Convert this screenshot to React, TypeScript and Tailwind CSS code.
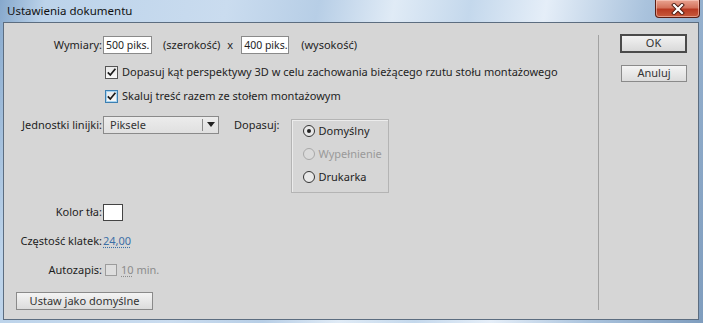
import React from "react";

const font = { fontFamily: '"Noto Sans", "Open Sans", sans-serif' };

function Check({ blue = false }: { blue?: boolean }) {
  return (
    <span
      className={
        "w-[13px] h-[13px] flex items-center justify-center bg-[linear-gradient(#e9e9e9,#f8f8f8)] border " +
        (blue ? "border-[#3c7fb1] shadow-[inset_0_0_0_1px_#a9d4f0]" : "border-[#555]")
      }
    >
      <svg width="11" height="11" viewBox="0 0 11 11">
        <path d="M1.8 5.3 L4.3 8 L9.4 1.8" fill="none" stroke="#1a1a1a" strokeWidth="1.7" />
      </svg>
    </span>
  );
}

function Radio({ checked = false, disabled = false, label }: { checked?: boolean; disabled?: boolean; label: string }) {
  return (
    <div className="flex items-center h-[14px] whitespace-nowrap">
      <span
        className={
          "w-[12px] h-[12px] rounded-full border flex items-center justify-center " +
          (disabled ? "border-[#a8a8a8] bg-[#dadada]" : "border-[#333] bg-[#e8e8e8]")
        }
      >
        {checked && <span className="w-[4px] h-[4px] rounded-full bg-[#222]" />}
      </span>
      <span className={"ml-[3px] " + (disabled ? "text-[#9a9a9a]" : "text-[#1e1e1e]")}>{label}</span>
    </div>
  );
}

export default function App() {
  return (
    <div
      className="relative w-[703px] h-[323px] overflow-hidden whitespace-nowrap bg-[linear-gradient(100deg,#86a8cc_0%,#bcd3ea_6%,#cadcef_30%,#b7cee6_42%,#e0ebf6_52%,#c4d8ec_62%,#e5eef8_72%,#aac3dd_85%,#7f9dbe_100%)] text-[11px] text-[#1e1e1e]"
      style={font}
    >
      {/* title bar */}
      <div className="h-[22px] flex items-center pl-[7px] text-[11.5px] text-[#111]">Ustawienia dokumentu</div>

      {/* close button */}
      <div className="absolute top-0 right-[3px] w-[45px] h-[18px] rounded-b-[4px] border border-t-0 border-[#5b1d12] bg-[linear-gradient(#e9a491_0%,#d4735c_45%,#b83a22_55%,#c85a3c_100%)] shadow-[inset_0_0_0_1px_rgba(255,220,210,0.5)] flex items-center justify-center">
        <svg width="14" height="12" viewBox="0 0 14 12">
          <path d="M3 2 L11 10 M11 2 L3 10" stroke="#4a1a10" strokeWidth="4" strokeLinecap="square" />
          <path d="M3 2 L11 10 M11 2 L3 10" stroke="#ffffff" strokeWidth="2.2" strokeLinecap="square" />
        </svg>
      </div>

      {/* client area */}
      <div className="ml-[3px] w-[696px] h-[298px] border border-[#5c6d80] bg-[#d6d6d6] flex">
        {/* left content */}
        <div className="w-[594px] pt-[13px] flex flex-col">
          {/* Wymiary */}
          <div className="flex items-center h-[18px]">
            <span className="w-[99px] text-right pr-[1px]">Wymiary:</span>
            <span className="w-[49px] h-[18px] bg-white border border-[#8a8a8a] pl-[2px] leading-[16px] overflow-hidden text-[10.5px]">500 piks.</span>
            <span className="ml-[11px]">(szerokość)</span>
            <span className="ml-[7px]">x</span>
            <span className="ml-[8px] w-[48px] h-[18px] bg-white border border-[#8a8a8a] pl-[2px] leading-[16px] overflow-hidden text-[10.5px]">400 piks.</span>
            <span className="ml-[12px]">(wysokość)</span>
          </div>

          {/* checkbox 1 */}
          <div className="flex items-center h-[14px] mt-[11px] pl-[101px]">
            <Check />
            <span className="ml-[4px]">Dopasuj kąt perspektywy 3D w celu zachowania bieżącego rzutu stołu montażowego</span>
          </div>

          {/* checkbox 2 */}
          <div className="flex items-center h-[14px] mt-[10px] pl-[101px]">
            <Check blue />
            <span className="ml-[4px]">Skaluj treść razem ze stołem montażowym</span>
          </div>

          {/* Jednostki + Dopasuj */}
          <div className="flex items-start mt-[13px]">
            <span className="w-[99px] text-right pr-[1px] h-[18px] leading-[18px]">Jednostki linijki:</span>
            <div className="w-[116px] h-[18px] border border-[#8a8a8a] bg-[linear-gradient(#ececec,#e0e0e0)] flex items-center">
              <span className="flex-1 pl-[6px] text-[#333]">Piksele</span>
              <span className="w-px h-[12px] bg-[#8a8a8a]" />
              <span className="w-[15px] flex justify-center">
                <svg width="8" height="6" viewBox="0 0 8 6">
                  <path d="M0 0 H8 L4 5 Z" fill="#222" />
                </svg>
              </span>
            </div>
            <span className="ml-[15px] h-[18px] leading-[18px]">Dopasuj:</span>
            <div className="ml-[12px] mt-[3px] w-[98px] h-[74px] border border-[#b4b4b4] shadow-[inset_1px_1px_0_#ececec] pl-[11px] pt-[4px] flex flex-col gap-[9px]">
              <Radio checked label="Domyślny" />
              <Radio disabled label="Wypełnienie" />
              <Radio label="Drukarka" />
            </div>
          </div>

          {/* Kolor tła */}
          <div className="flex items-center h-[17px] mt-[11px]">
            <span className="w-[99px] text-right pr-[1px]">Kolor tła:</span>
            <span className="w-[20px] h-[17px] bg-white border border-[#444]" />
          </div>

          {/* Częstość */}
          <div className="flex items-center h-[16px] mt-[12px]">
            <span className="w-[99px] text-right pr-[1px]">Częstość klatek:</span>
            <span className="text-[#3d6fa6] underline decoration-dotted decoration-[#3d6fa6] underline-offset-[2px]">24,00</span>
          </div>

          {/* Autozapis */}
          <div className="flex items-center h-[16px] mt-[13px]">
            <span className="w-[99px] text-right pr-[1px]">Autozapis:</span>
            <span className="ml-[2px] w-[12px] h-[12px] border border-[#9c9c9c] bg-[#dedede]" />
            <span className="ml-[4px] text-[#8c8c8c]">
              <span className="underline decoration-dotted underline-offset-[2px]">10</span> min.
            </span>
          </div>

          {/* Ustaw */}
          <div className="mt-[14px] pl-[12px]">
            <div className="w-[137px] h-[18px] border border-[#8a8a8a] bg-[linear-gradient(#f4f4f4,#dcdcdc)] flex items-center justify-center text-[#333]">
              Ustaw jako domyślne
            </div>
          </div>
        </div>

        {/* divider */}
        <div className="w-px bg-[#a2a2a2] mt-[12px] mb-[9px]" />

        {/* right buttons */}
        <div className="pl-[21px] pt-[11px] flex flex-col">
          <div className="w-[67px] h-[19px] border-2 border-[#4a4a4a] bg-[linear-gradient(#f2f2f2,#d9d9d9)] flex items-center justify-center text-[#333]">
            OK
          </div>
          <div className="mt-[12px] ml-[1px] w-[66px] h-[17px] border border-[#8a8a8a] bg-[linear-gradient(#f4f4f4,#dcdcdc)] flex items-center justify-center text-[#333]">
            Anuluj
          </div>
        </div>
      </div>
    </div>
  );
}
